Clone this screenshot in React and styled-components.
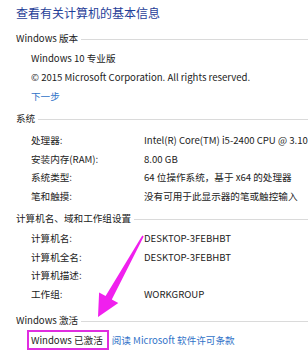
import React from "react";
import styled, { createGlobalStyle } from "styled-components";

const GlobalStyle = createGlobalStyle`
	html, body {
		margin: 0;
		padding: 0;
		background: #ffffff;
	}
	body {
		font-family: "Noto Sans CJK SC", "Liberation Sans", sans-serif;
		color: #222222;
	}
`;

const Page = styled.div`
	position: relative;
	width: 308px;
	height: 360px;
	overflow: hidden;
	padding-left: 16px;
	box-sizing: border-box;
	background: #ffffff;
`;

const Title = styled.div`
	margin-top: 4px;
	height: 18px;
	line-height: 18px;
	font-size: 12px;
	color: #1f3e98;
	white-space: nowrap;
`;

const Section = styled.div`
	margin-top: ${p => p.$top}px;
`;

const Header = styled.div`
	display: flex;
	align-items: center;
	height: 16px;
	font-size: 9.6px;
	white-space: nowrap;
`;

const HeaderLine = styled.div`
	flex: 1;
	height: 1px;
	margin-left: 3px;
	margin-top: 2px;
	background: #dadada;
`;

const Body = styled.div`
	margin-top: ${p => p.$top}px;
	padding-left: 15px;
`;

const Line = styled.div`
	height: 19px;
	line-height: 19px;
	font-size: 9.6px;
	white-space: nowrap;
`;

const LinkLine = styled(Line)`
	color: #2f72c8;
`;

const Grid = styled.div`
	display: grid;
	grid-template-columns: 113px 1fr;
	grid-auto-rows: 18.5px;
	align-items: center;
	font-size: 9.6px;
	white-space: nowrap;
`;

const Label = styled.div``;

const Value = styled.div``;

const ActivationRow = styled.div`
	display: flex;
	align-items: center;
	height: 19px;
	margin-left: -4px;
	font-size: 9.6px;
	white-space: nowrap;
`;

const Highlight = styled.span`
	display: inline-flex;
	align-items: center;
	height: 16px;
	padding: 0 4px 0 2px;
	border: 2px solid #e02de0;
`;

const LicenseLink = styled.span`
	margin-left: 3px;
	color: #2f72c8;
`;

const Overlay = styled.svg`
	position: absolute;
	left: 0;
	top: 0;
	pointer-events: none;
`;

const systemRows = [
	["处理器:", "Intel(R) Core(TM) i5-2400 CPU @ 3.10"],
	["安装内存(RAM):", "8.00 GB"],
	["系统类型:", "64 位操作系统，基于 x64 的处理器"],
	["笔和触摸:", "没有可用于此显示器的笔或触控输入"],
];

const nameRows = [
	["计算机名:", "DESKTOP-3FEBHBT"],
	["计算机全名:", "DESKTOP-3FEBHBT"],
	["计算机描述:", ""],
	["工作组:", "WORKGROUP"],
];

const Rows = ({ rows }) => (
	<Grid>
		{rows.map(([label, value]) => (
			<React.Fragment key={label}>
				<Label>{label}</Label>
				<Value>{value}</Value>
			</React.Fragment>
		))}
	</Grid>
);

const SectionHeader = ({ children }) => (
	<Header>
		{children}
		<HeaderLine />
	</Header>
);

const Arrow = () => (
	<Overlay width="308" height="360" viewBox="0 0 308 360">
		<polygon
			points="142.3,235.6 143.7,236.4 111.8,299.5 118.3,303.1 98,317 99.1,292.5 105.6,296.1"
			fill="#f020ee"
		/>
	</Overlay>
);

const App = () => {
	return (
		<>
			<GlobalStyle />
			<Page>
				<Title>查看有关计算机的基本信息</Title>

				<Section $top={8}>
					<SectionHeader>Windows 版本</SectionHeader>
					<Body $top={2.5}>
						<Line>Windows 10 专业版</Line>
						<Line>© 2015 Microsoft Corporation. All rights reserved.</Line>
						<LinkLine>下一步</LinkLine>
					</Body>
				</Section>

				<Section $top={4.5}>
					<SectionHeader>系统</SectionHeader>
					<Body $top={4.75}>
						<Rows rows={systemRows} />
					</Body>
				</Section>

				<Section $top={5.25}>
					<SectionHeader>计算机名、域和工作组设置</SectionHeader>
					<Body $top={2.75}>
						<Rows rows={nameRows} />
					</Body>
				</Section>

				<Section $top={9.25}>
					<SectionHeader>Windows 激活</SectionHeader>
					<Body $top={2.5}>
						<ActivationRow>
							<Highlight>Windows 已激活</Highlight>
							<LicenseLink>阅读 Microsoft 软件许可条款</LicenseLink>
						</ActivationRow>
					</Body>
				</Section>

				<Arrow />
			</Page>
		</>
	);
};

export default App;
